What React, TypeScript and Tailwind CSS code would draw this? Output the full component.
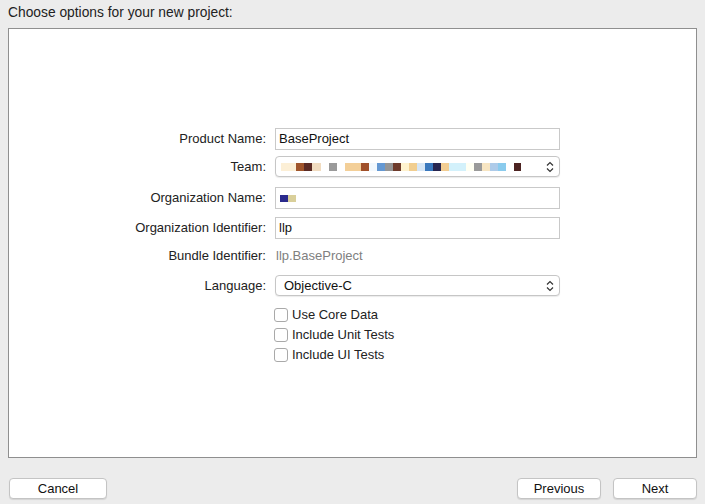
const FONT = "font-['Liberation_Sans',Arial,sans-serif]";

// blurred team name, drawn as pixel blocks: [width, colour]
const TEAM_BLOCKS: [number, string][] = [
  [15, "#fcefd6"], [8, "#a0552b"], [8, "#5b2b24"], [9, "#f1dcc0"], [8, "transparent"],
  [8, "#9a9a9a"], [8, "transparent"], [16, "#f3cf98"], [8, "#a0502a"], [8, "#f2f8fd"],
  [8, "#6498d2"], [8, "#959595"], [8, "#6e3b2b"], [8, "#fff3cf"], [8, "#f1ce90"],
  [8, "#d6e6f6"], [8, "#3a78bd"], [8, "#27254f"], [8, "#f2cd92"], [17, "#d3f1fb"],
  [8, "#fffff2"], [8, "#9a9a9a"], [8, "#f7e5c2"], [8, "#aecbe9"], [8, "#8acbed"],
  [8, "transparent"], [7, "#4c2321"],
];

function Chevrons() {
  return (
    <svg width="8" height="12" viewBox="0 0 8 12" className="shrink-0">
      <path d="M1 4.5 L4 1.5 L7 4.5" fill="none" stroke="#333" strokeWidth="1.2" />
      <path d="M1 7.5 L4 10.5 L7 7.5" fill="none" stroke="#333" strokeWidth="1.2" />
    </svg>
  );
}

function Label({ children }: { children: React.ReactNode }) {
  return <div className="w-[257px] shrink-0 text-right text-[13px] text-[#222]">{children}</div>;
}

function TextField({ children }: { children?: React.ReactNode }) {
  return (
    <div className="ml-[9px] flex h-[22px] w-[285px] items-center border border-[#c9c9c9] bg-white px-[3px] text-[13px] text-[#111]">
      {children}
    </div>
  );
}

function Popup({ children }: { children?: React.ReactNode }) {
  return (
    <div className="ml-[9px] flex h-[21px] w-[285px] items-center justify-between rounded-[4px] border border-[#c6c6c6] bg-white pl-[8px] pr-[5px] text-[13px] text-[#111] shadow-[0_1px_1px_rgba(0,0,0,0.08)]">
      <div className="flex items-center">{children}</div>
      <Chevrons />
    </div>
  );
}

function Check({ label }: { label: string }) {
  return (
    <div className="flex h-5 items-center">
      <div className="w-[257px] shrink-0" />
      <div className="ml-[8px] h-[14px] w-[14px] rounded-[3px] border border-[#a9a9a9] bg-white" />
      <span className="ml-[4px] text-[13px] text-[#222]">{label}</span>
    </div>
  );
}

function Button({ label, width }: { label: string; width: string }) {
  return (
    <button
      className={`${width} h-[21px] rounded-[4px] border border-[#c4c4c4] bg-white text-[13px] leading-none text-[#111] shadow-[0_1px_1px_rgba(0,0,0,0.1)]`}
    >
      {label}
    </button>
  );
}

export default function App() {
  return (
    <div className={`${FONT} flex h-[504px] w-[705px] flex-col bg-[#ececec]`}>
      <div className="h-[28px] px-2 pt-[3px] text-[13.8px] text-[#222]">Choose options for your new project:</div>

      <div className="mx-2 h-[430px] border border-[#8f8f8f] bg-white pt-[99px]">
        <div className="flex h-[22px] items-center">
          <Label>Product Name:</Label>
          <TextField>BaseProject</TextField>
        </div>

        <div className="mt-[6px] flex h-[21px] items-center">
          <Label>Team:</Label>
          <Popup>
            <div className="-ml-[3px] flex h-[8px]">
              {TEAM_BLOCKS.map(([w, c], i) => (
                <span key={i} className="h-full" style={{ width: w, backgroundColor: c }} />
              ))}
            </div>
          </Popup>
        </div>

        <div className="mt-[10px] flex h-[22px] items-center">
          <Label>Organization Name:</Label>
          <TextField>
            <div className="ml-[1px] flex h-[7px]">
              <span className="h-full w-[8px] bg-[#2a2a8c]" />
              <span className="h-full w-[8px] bg-[#d9cf9a]" />
            </div>
          </TextField>
        </div>

        <div className="mt-[8px] flex h-[22px] items-center">
          <Label>Organization Identifier:</Label>
          <TextField>llp</TextField>
        </div>

        <div className="mt-[9px] flex h-4 items-center">
          <Label>Bundle Identifier:</Label>
          <span className="ml-[10px] text-[13px] text-[#808080]">llp.BaseProject</span>
        </div>

        <div className="mt-[11px] flex h-[21px] items-center">
          <Label>Language:</Label>
          <Popup>Objective-C</Popup>
        </div>

        <div className="mt-[9px] flex flex-col">
          <Check label="Use Core Data" />
          <Check label="Include Unit Tests" />
          <Check label="Include UI Tests" />
        </div>
      </div>

      <div className="mt-5 flex items-center pl-[9px] pr-2">
        <Button label="Cancel" width="w-[98px]" />
        <div className="flex-1" />
        <Button label="Previous" width="w-[84px]" />
        <div className="w-[12px]" />
        <Button label="Next" width="w-[84px]" />
      </div>
    </div>
  );
}
